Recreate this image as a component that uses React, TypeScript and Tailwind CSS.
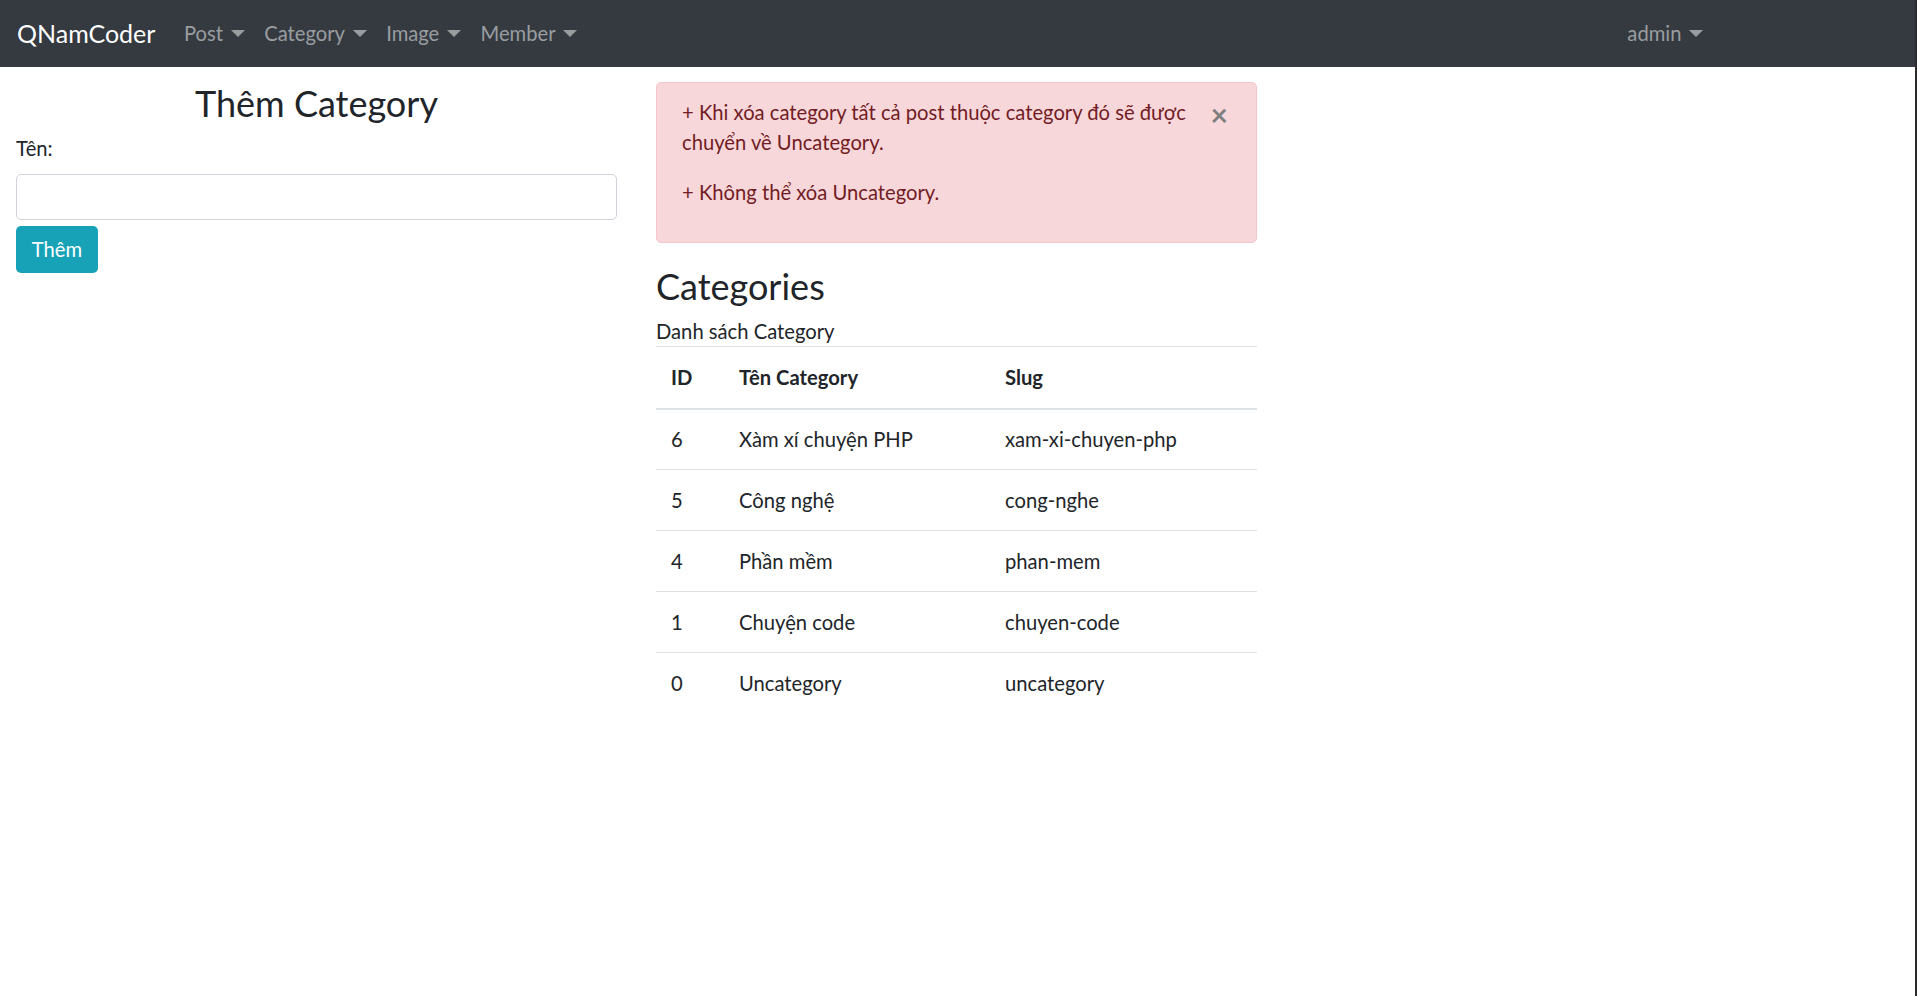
import React from "react";

const Caret = () => (
  <span className="inline-block w-0 h-0 ml-[8px] align-[4px] border-t-[7px] border-l-[7px] border-r-[7px] border-l-transparent border-r-transparent border-t-[#9a9da0]" />
);

const rows = [
  { id: "6", name: "Xàm xí chuyện PHP", slug: "xam-xi-chuyen-php" },
  { id: "5", name: "Công nghệ", slug: "cong-nghe" },
  { id: "4", name: "Phần mềm", slug: "phan-mem" },
  { id: "1", name: "Chuyện code", slug: "chuyen-code" },
  { id: "0", name: "Uncategory", slug: "uncategory" },
];

export default function App() {
  return (
    <div
      className="flex min-h-[996px] w-full bg-white text-[#212529] text-[20.2px] leading-[1.5]"
      style={{ fontFamily: "Lato, 'Open Sans', sans-serif" }}
    >
      <div className="flex-1 flex flex-col">
        <nav className="h-[67px] bg-[#343a40] flex items-center pl-[17px] pr-[202px]">
          <span className="text-white text-[25px] mr-[19px]">QNamCoder</span>
          {["Post", "Category", "Image", "Member"].map((l) => (
            <span key={l} className="px-[9.6px] text-[#9a9da0] whitespace-nowrap">
              {l}
              <Caret />
            </span>
          ))}
          <span className="ml-auto px-[9.6px] text-[#9a9da0] whitespace-nowrap">
            admin
            <Caret />
          </span>
        </nav>
        <div className="flex pl-[16px] gap-[39px]">
          {/* left column */}
          <div className="w-[601px] flex flex-col">
            <h2 className="mt-[13px] text-[36px] leading-[46px] text-center">Thêm Category</h2>
            <label className="mt-[8px] leading-[29px]">Tên:</label>
            <div className="mt-[11px] h-[46px] border border-[#ced4da] rounded-[5px] bg-white" />
            <button className="mt-[6px] w-[82px] h-[47px] rounded-[5px] bg-[#17a2b8] text-white">Thêm</button>
          </div>
          {/* right column */}
          <div className="w-[601px] flex flex-col">
            <div className="mt-[15px] border border-[#f5c6cb] bg-[#f8d7da] text-[#721c24] rounded-[5px] pt-[14px] pb-[15px] pl-[25px] pr-[24px] flex">
              <div className="flex-1 leading-[30px]">
                <p className="whitespace-nowrap">+ Khi xóa category tất cả post thuộc category đó sẽ được</p>
                <p className="whitespace-nowrap">chuyển về Uncategory.</p>
                <p className="mt-[20px] mb-[20px] whitespace-nowrap">+ Không thể xóa Uncategory.</p>
              </div>
              <span className="text-[30px] leading-[30px] font-bold text-[#7f7f7f] mt-[2px] mr-[4px]">×</span>
            </div>
            <h2 className="mt-[20px] text-[36px] leading-[46px]">Categories</h2>
            <div className="mt-[8px] leading-[29px]">Danh sách Category</div>
            <table className="w-full border-collapse">
              <thead>
                <tr className="h-[62px] border-t border-[#dee2e6] border-b-[2px]">
                  <th className="w-[68px] pl-[15px] text-left font-bold">ID</th>
                  <th className="w-[266px] pl-[15px] text-left font-bold">Tên Category</th>
                  <th className="pl-[15px] text-left font-bold">Slug</th>
                </tr>
              </thead>
              <tbody>
                {rows.map((r, i) => (
                  <tr key={r.id} className={"h-[61px] " + (i > 0 ? "border-t border-[#dee2e6]" : "")}>
                    <td className="pl-[15px]">{r.id}</td>
                    <td className="pl-[15px]">{r.name}</td>
                    <td className="pl-[15px]">{r.slug}</td>
                  </tr>
                ))}
              </tbody>
            </table>
          </div>
        </div>
      </div>
      <div className="w-[2px] bg-[#2b2b2b]" />
    </div>
  );
}
